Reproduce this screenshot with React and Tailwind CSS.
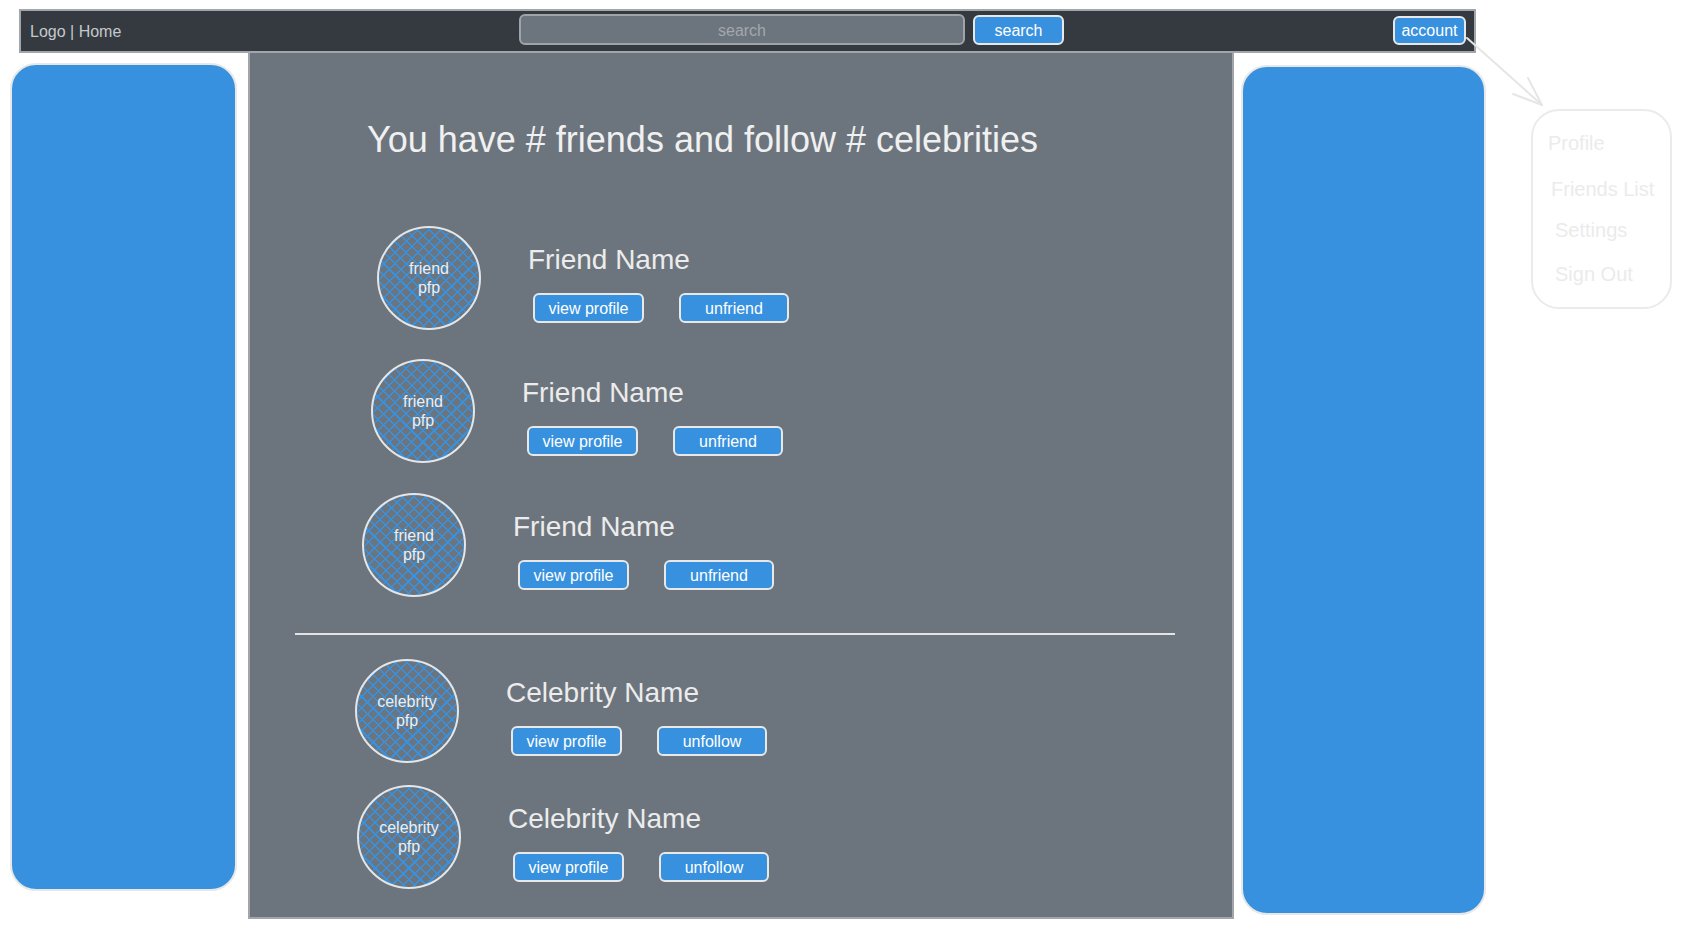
import React from "react";

const font = { fontFamily: '"Liberation Sans", Arial, sans-serif' };

const friends = [
  { wrap: "ml-[127px] mt-[66px]" },
  { wrap: "ml-[121px] mt-[29px]" },
  { wrap: "ml-[112px] mt-[30px]" },
];

const celebs = [
  { wrap: "ml-[105px] mt-[24px]" },
  { wrap: "ml-[107px] mt-[22px]" },
];

function Pfp({ label }) {
  return (
    <div className="w-[104px] h-[104px] shrink-0 rounded-full border-2 border-[#e6e6e6] bg-[#6c757d] bg-[image:repeating-linear-gradient(45deg,#3791de_0px,#3791de_1.5px,transparent_1.5px,transparent_8px),repeating-linear-gradient(-45deg,#3791de_0px,#3791de_1.5px,transparent_1.5px,transparent_8px)] flex flex-col items-center justify-center text-[16px] leading-[19px] text-[#eeeeee]">
      <span>{label}</span>
      <span>pfp</span>
    </div>
  );
}

function Btn({ children, className }) {
  return (
    <button
      type="button"
      className={
        "h-[30px] rounded-md border-2 border-[#e8e8e8] bg-[#3791de] text-[16px] leading-none text-white " +
        className
      }
    >
      {children}
    </button>
  );
}

function PersonRow({ wrap, label, name, action }) {
  return (
    <div className={"flex items-start " + wrap}>
      <Pfp label={label} />
      <div className="ml-[47px] mt-[18px] flex flex-col">
        <div className="text-[28px] leading-[32px] text-[#ececec]">{name}</div>
        <div className="mt-[17px] ml-[5px] flex">
          <Btn className="w-[111px] pt-[2px]">view profile</Btn>
          <Btn className="w-[110px] ml-[35px] pt-[1px]">{action}</Btn>
        </div>
      </div>
    </div>
  );
}

export default function App() {
  return (
    <div className="relative w-[1682px] h-[929px] overflow-hidden bg-white" style={font}>
      {/* top bar */}
      <div className="ml-[19px] mt-[9px] w-[1457px] h-[44px] border-2 border-[#a2a6aa] bg-[#343a40] flex items-start">
        <div className="w-[498px] pl-[9px] mt-[11px] text-[16px] leading-[20px] text-[#c6c9cc]">
          Logo | Home
        </div>
        <div className="mt-[3px] w-[446px] h-[31px] pt-[2px] rounded-md border-2 border-[#a0a4a8] bg-[#6c757d] flex items-center justify-center text-[16px] text-[#a3a8ad]">
          search
        </div>
        <Btn className="mt-[4px] ml-[8px] w-[91px] pt-[2px]">search</Btn>
        <Btn className="mt-[5px] ml-auto mr-[8px] w-[73px] !h-[29px] pt-[1px]">account</Btn>
      </div>

      {/* body */}
      <div className="flex items-start">
        <div className="ml-[10px] mt-[10px] w-[227px] h-[828px] rounded-[26px] border-2 border-[#e8e8e8] bg-[#3791de]" />

        <div className="ml-[11px] w-[986px] h-[866px] border-2 border-t-0 border-[#a2a6aa] bg-[#6c757d] flex flex-col">
          <h1 className="mt-[67px] ml-[117px] text-[36px] leading-[40px] text-[#f0f0f0]">
            You have # friends and follow # celebrities
          </h1>
          {friends.map((f, i) => (
            <PersonRow key={i} wrap={f.wrap} label="friend" name="Friend Name" action="unfriend" />
          ))}
          <div className="mt-[36px] ml-[45px] w-[880px] h-[2px] bg-[#e4e4e4]" />
          {celebs.map((c, i) => (
            <PersonRow key={i} wrap={c.wrap} label="celebrity" name="Celebrity Name" action="unfollow" />
          ))}
        </div>

        <div className="ml-[7px] mt-[12px] w-[245px] h-[850px] rounded-[26px] border-2 border-[#e8e8e8] bg-[#3791de]" />
      </div>

      {/* account arrow */}
      <svg className="absolute left-0 top-0 pointer-events-none" width="1682" height="929">
        <g stroke="#e6e6e6" strokeWidth="2" fill="none" strokeLinecap="round">
          <line x1="1467" y1="38" x2="1542" y2="105" />
          <line x1="1542" y1="105" x2="1513" y2="94" />
          <line x1="1542" y1="105" x2="1528" y2="78" />
        </g>
      </svg>

      {/* account menu */}
      <div className="absolute left-[1531px] top-[109px] w-[141px] h-[200px] rounded-[28px] border-2 border-[#ebebeb] bg-white flex flex-col text-[20px] leading-[24px] text-[#ebebeb]">
        <span className="mt-[20px] ml-[15px]">Profile</span>
        <span className="mt-[22px] ml-[18px]">Friends List</span>
        <span className="mt-[17px] ml-[22px]">Settings</span>
        <span className="mt-[20px] ml-[22px]">Sign Out</span>
      </div>
    </div>
  );
}
